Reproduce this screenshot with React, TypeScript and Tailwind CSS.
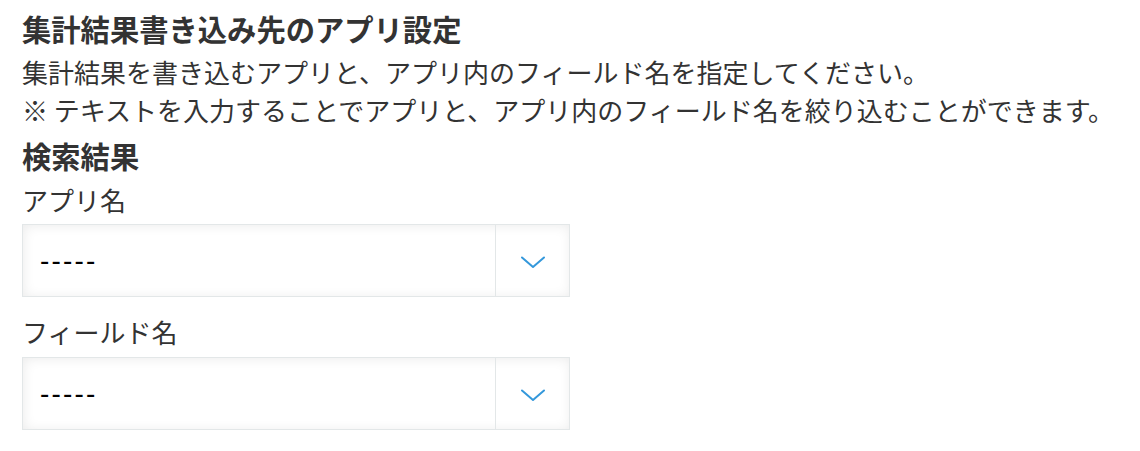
const FONT = "font-['Meiryo','Noto_Sans_CJK_JP','Noto_Sans',sans-serif]";

function Chevron() {
  return (
    <svg width="24" height="13" viewBox="0 0 24 13" fill="none" aria-hidden="true">
      <path d="M1 1.5 L12 11 L23 1.5" stroke="#3498db" strokeWidth="2" strokeLinecap="round" strokeLinejoin="round" />
    </svg>
  );
}

// kintone風のドロップダウン（表示のみ）
function SelectBox() {
  return (
    <div className="flex h-[73px] w-[548px] border border-[#e3e7e8] bg-white shadow-[inset_1px_1px_12px_#ececec]">
      <div className="flex flex-1 items-center pb-[5px] pl-[17px] text-[26px] font-medium tracking-[2.2px] text-black">-----</div>
      <div className="flex w-[74px] items-center justify-center border-l border-[#e3e7e8] pt-[3px]">
        <Chevron />
      </div>
    </div>
  );
}

export default function App() {
  return (
    <div className={`min-h-screen bg-white pl-[22px] pt-[9px] text-[#333] ${FONT}`}>
      <h1 className="text-[29.3px] font-bold leading-[38px]">集計結果書き込み先のアプリ設定</h1>
      <div className="mt-[6px] text-[26px] leading-[38px]">
        <p>集計結果を書き込むアプリと、アプリ内のフィールド名を指定してください。</p>
        <p>※ テキストを入力することでアプリと、アプリ内のフィールド名を絞り込むことができます。</p>
      </div>
      <h2 className="mt-[7px] text-[29.3px] font-bold leading-[38px]">検索結果</h2>

      <div className="mt-[7px] text-[26px] leading-[38px]">アプリ名</div>
      <div className="mt-[5px]">
        <SelectBox />
      </div>

      <div className="mt-[16px] text-[26px] leading-[38px]">フィールド名</div>
      <div className="mt-[6px]">
        <SelectBox />
      </div>
    </div>
  );
}
